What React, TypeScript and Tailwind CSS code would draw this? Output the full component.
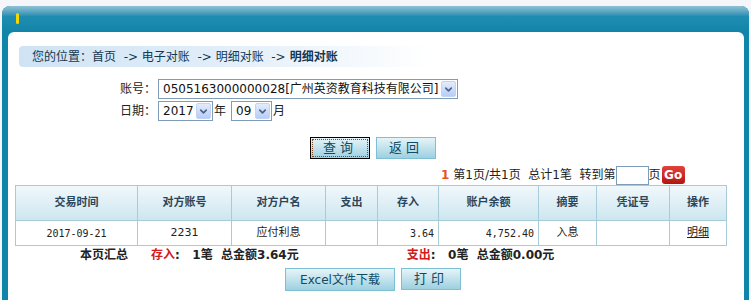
import { ChevronDown } from "lucide-react";

const cols = [
  { label: "交易时间", w: "w-[122px]" },
  { label: "对方账号", w: "w-[94px]" },
  { label: "对方户名", w: "w-[94px]" },
  { label: "支出", w: "w-[52px]" },
  { label: "存入", w: "w-[61px]" },
  { label: "账户余额", w: "w-[100px]" },
  { label: "摘要", w: "w-[58px]" },
  { label: "凭证号", w: "w-[73px]" },
  { label: "操作", w: "w-[57px]" },
];

function Select({ value, width }: { value: string; width: string }) {
  return (
    <div className={`flex items-center justify-between h-[20px] border border-[#7f9db9] bg-white ${width}`}>
      <span className="pl-[4px] text-[12px] leading-none text-[#111] whitespace-nowrap">{value}</span>
      <span className="flex items-center justify-center w-[15px] h-[16px] mr-[1px] rounded-[2px] bg-gradient-to-b from-[#e3ecfd] to-[#b7cdf6] border border-[#c3d3f5]">
        <ChevronDown className="w-[11px] h-[11px] text-[#4d6185]" strokeWidth={3.5} />
      </span>
    </div>
  );
}

function Btn({ label, width, focused }: { label: string; width: string; focused?: boolean }) {
  return (
    <div
      className={`flex items-center justify-center h-[22px] ${width} border ${
        focused ? "border-black" : "border-[#7fbfd3]"
      } bg-gradient-to-b from-[#e6f4f8] to-[#9dd0e0] p-[1px]`}
    >
      <div
        className={`flex items-center justify-center w-full h-full text-[13px] tracking-[4px] text-[#0d4c64] ${
          focused ? "border border-dotted border-[#7a4a2a]" : ""
        }`}
      >
        {label}
      </div>
    </div>
  );
}

export default function App() {
  return (
    <div className="w-[751px] h-[300px] overflow-hidden bg-[#f4f6f9] pt-[6px] pl-[2px] pr-[2px] font-[family-name:'DejaVu_Sans','Noto_Sans_CJK_SC',sans-serif]">
      <div className="flex flex-col h-[294px] rounded-t-[8px] bg-[#1185a9]">
        <div className="h-[26px] rounded-t-[8px] bg-gradient-to-b from-[#8fc3d6] via-[#1f8db0] via-40% to-[#1185a9] pl-[14px] pt-[7px]">
          <div className="w-[3px] h-[11px] rounded-full bg-[#f4d800]" />
        </div>
        <div className="flex-1 ml-[6px] mr-[5px] rounded-t-[6px] bg-white">
          <div className="mt-[14px] ml-[11px] w-[412px] h-[21px] rounded-[4px] bg-gradient-to-r from-[#cfe3f4] via-[#e2eef9] to-white flex items-center pl-[13px] text-[12px] text-[#15374f] whitespace-nowrap">
            <span>您的位置：首页&nbsp; -&gt; 电子对账&nbsp; -&gt; 明细对账&nbsp; -&gt; </span>
            <span className="ml-[4px] font-bold">明细对账</span>
          </div>

          <div className="mt-[12px] ml-[111px] flex flex-col gap-[2px] text-[12px] text-[#222]">
            <div className="flex items-center">
              <span className="w-[39px] text-right pr-[2px]">账号：</span>
              <Select value="0505163000000028[广州英资教育科技有限公司]" width="w-[300px]" />
            </div>
            <div className="flex items-center">
              <span className="w-[39px] text-right pr-[2px]">日期：</span>
              <Select value="2017" width="w-[55px]" />
              <span className="w-[18px] pl-[1px]">年</span>
              <Select value="09" width="w-[41px]" />
              <span className="pl-[1px]">月</span>
            </div>
          </div>

          <div className="mt-[16px] ml-[302px] flex gap-[6px]">
            <Btn label="查询" width="w-[60px]" focused />
            <Btn label="返回" width="w-[60px]" />
          </div>

          <div className="mt-[6px] ml-[433px] flex items-center h-[20px] text-[12px] text-[#222] whitespace-nowrap">
            <span className="text-[#e8541c] font-bold mr-[4px]">1</span>
            <span>第1页/共1页&nbsp; 总计1笔&nbsp; 转到第</span>
            <span className="w-[33px] h-[19px] border border-[#7f9db9] bg-white" />
            <span>页</span>
            <span className="ml-[1px] flex items-center justify-center w-[23px] h-[18px] rounded-[3px] bg-gradient-to-b from-[#e2413c] to-[#b3130f] text-white text-[12px] font-bold leading-none">
              Go
            </span>
          </div>

          <table className="ml-[7px] border-collapse text-[11px] text-[#222] table-fixed">
            <thead>
              <tr className="h-[35px] bg-gradient-to-b from-[#f1f8fb] to-[#cbe6ef]">
                {cols.map((c) => (
                  <th key={c.label} className={`${c.w} border border-[#a7cbd9] font-bold text-[#2c4558] text-center`}>
                    {c.label}
                  </th>
                ))}
              </tr>
            </thead>
            <tbody>
              <tr className="h-[25px] bg-white">
                <td className="border border-[#a7cbd9] text-center font-[family-name:'DejaVu_Sans_Mono',monospace] text-[10px]">2017-09-21</td>
                <td className="border border-[#a7cbd9] text-center">2231</td>
                <td className="border border-[#a7cbd9] text-center">应付利息</td>
                <td className="border border-[#a7cbd9]" />
                <td className="border border-[#a7cbd9] text-right pr-[4px] font-[family-name:'DejaVu_Sans_Mono',monospace] text-[10px]">3.64</td>
                <td className="border border-[#a7cbd9] text-right pr-[4px] font-[family-name:'DejaVu_Sans_Mono',monospace] text-[10px]">4,752.40</td>
                <td className="border border-[#a7cbd9] text-center">入息</td>
                <td className="border border-[#a7cbd9]" />
                <td className="border border-[#a7cbd9] text-center underline">明细</td>
              </tr>
            </tbody>
          </table>

          <div className="mt-[1px] flex items-center h-[16px] text-[12px] font-bold text-[#222] whitespace-nowrap">
            <span className="ml-[72px]">本页汇总</span>
            <span className="ml-[23px] text-[#d21a1a]">存入</span>
            <span>:&nbsp;&nbsp; 1笔&nbsp; 总金额3.64元</span>
            <span className="ml-[108px] text-[#d21a1a]">支出</span>
            <span>:&nbsp;&nbsp; 0笔&nbsp; 总金额0.00元</span>
          </div>

          <div className="mt-[5px] ml-[277px] flex gap-[6px]">
            <div className="flex items-center justify-center w-[110px] h-[23px] border border-[#7fbfd3] bg-gradient-to-b from-[#e6f4f8] to-[#9dd0e0] text-[12px] text-[#0d4c64]">
              Excel文件下载
            </div>
            <Btn label="打印" width="w-[60px]" />
          </div>
        </div>
      </div>
    </div>
  );
}
